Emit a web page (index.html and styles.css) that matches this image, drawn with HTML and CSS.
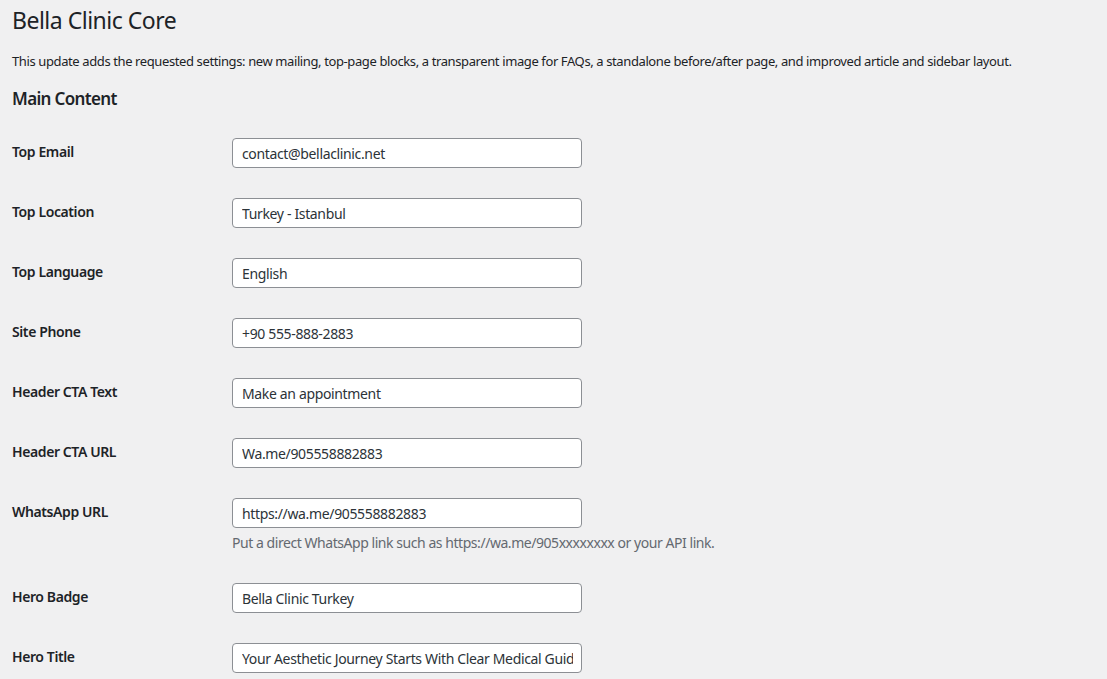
FILE: index.html
```html
<!DOCTYPE html>
<html lang="en">
<head>
  <meta charset="UTF-8" />
  <title>Bella Clinic Core</title>
  <link rel="stylesheet" href="styles.css">
</head>
<body>
  <div class="wrap">
    <h1>Bella Clinic Core</h1>
    <p class="intro">This update adds the requested settings: new mailing, top-page blocks, a transparent image for FAQs, a standalone before/after page, and improved article and sidebar layout.</p>

    <h2>Main Content</h2>

    <form class="settings">
      <div class="row">
        <label class="label" for="top_email">Top Email</label>
        <div class="field"><input id="top_email" type="text" value="contact@bellaclinic.net"></div>
      </div>
      <div class="row">
        <label class="label" for="top_location">Top Location</label>
        <div class="field"><input id="top_location" type="text" value="Turkey - Istanbul"></div>
      </div>
      <div class="row">
        <label class="label" for="top_language">Top Language</label>
        <div class="field"><input id="top_language" type="text" value="English"></div>
      </div>
      <div class="row">
        <label class="label" for="site_phone">Site Phone</label>
        <div class="field"><input id="site_phone" type="text" value="+90 555-888-2883"></div>
      </div>
      <div class="row">
        <label class="label" for="cta_text">Header CTA Text</label>
        <div class="field"><input id="cta_text" type="text" value="Make an appointment"></div>
      </div>
      <div class="row">
        <label class="label" for="cta_url">Header CTA URL</label>
        <div class="field"><input id="cta_url" type="text" value="Wa.me/905558882883"></div>
      </div>
      <div class="row">
        <label class="label" for="whatsapp">WhatsApp URL</label>
        <div class="field">
          <input id="whatsapp" type="text" value="https://wa.me/905558882883">
          <p class="description">Put a direct WhatsApp link such as https://wa.me/905xxxxxxxx or your API link.</p>
        </div>
      </div>
      <div class="row">
        <label class="label" for="hero_badge">Hero Badge</label>
        <div class="field"><input id="hero_badge" type="text" value="Bella Clinic Turkey"></div>
      </div>
      <div class="row">
        <label class="label" for="hero_title">Hero Title</label>
        <div class="field"><input id="hero_title" type="text" value="Your Aesthetic Journey Starts With Clear Medical Guidance"></div>
      </div>
    </form>
  </div>
</body>
</html>
```

FILE: styles.css
```css
* { box-sizing: border-box; }
html, body {
  margin: 0; padding: 0;
  background: #f0f0f1;
  color: #1d2327;
  font-family: 'Noto Sans', 'Open Sans', sans-serif;
  font-size: 13px;
  letter-spacing: -0.35px;
  overflow: hidden;
}
.wrap {
  padding: 5px 20px 0 12px;
}
h1 {
  margin: 0;
  padding: 0 0 4px;
  font-size: 23px;
  font-weight: 400;
  line-height: 30px;
  letter-spacing: -0.5px;
}
.intro {
  margin: 13px 0;
  font-size: 13px;
  line-height: 19px;
  letter-spacing: -0.39px;
}
h2 {
  margin: 16px 0 0;
  font-size: 17px;
  font-weight: 600;
  line-height: 24px;
  letter-spacing: -0.65px;
}
.settings {
  margin-top: 12px;
}
.row {
  display: flex;
  align-items: flex-start;
}
.label {
  width: 210px;
  flex-shrink: 0;
  padding: 20px 10px 20px 0;
  font-size: 14px;
  font-weight: 600;
  line-height: 18px;
  letter-spacing: -0.4px;
}
.field {
  padding: 15px 10px;
}
.field input {
  display: block;
  width: 350px;
  height: 30px;
  margin: 0;
  padding: 0 8px 0 9px;
  border: 1px solid #8c8f94;
  border-radius: 4px;
  background: #fff;
  color: #2c3338;
  font-family: inherit;
  font-size: 14px;
  line-height: 26px;
  letter-spacing: -0.35px;
}
.description {
  margin: 4px 0 0;
  color: #646970;
  font-size: 14px;
  line-height: 21px;
  letter-spacing: -0.45px;
}
```
